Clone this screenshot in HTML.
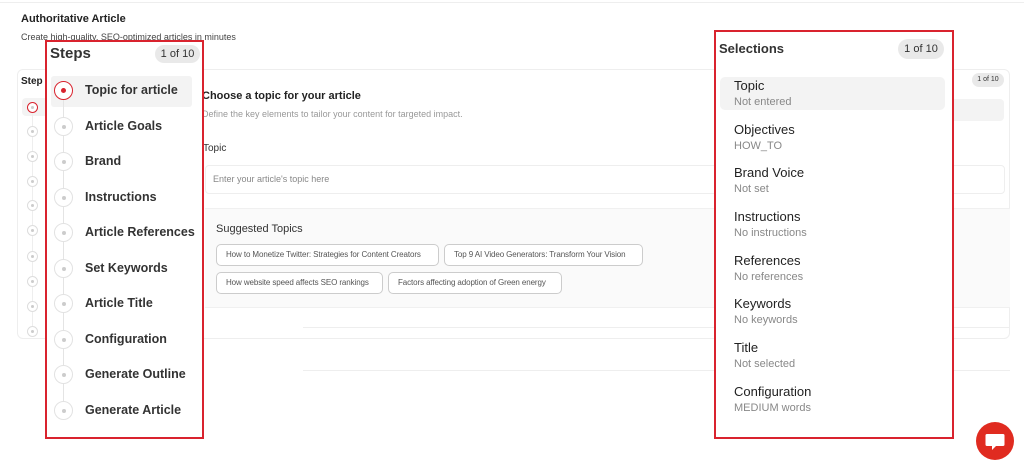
<!DOCTYPE html>
<html><head><meta charset="utf-8"><style>
*{margin:0;padding:0;box-sizing:border-box}
body{width:1024px;height:465px;background:#fff;font-family:"Liberation Sans",Arial,sans-serif;position:relative;overflow:hidden;color:#222}
.a{position:absolute;white-space:nowrap}
.badge{position:absolute;background:#e9e9e9;border-radius:10px;color:#333;text-align:center}
.chip{position:absolute;border:1px solid #ccc;border-radius:5px;font-size:8px;color:#555;padding:0 9px;line-height:20px;height:22px;background:#fff;white-space:nowrap;overflow:hidden;letter-spacing:-0.1px}
.mc{position:absolute;left:27px;width:11px;height:11px;border:1px solid #ddd;border-radius:50%;background:#fff}
.mc::after{content:"";position:absolute;left:3px;top:3px;width:3px;height:3px;border-radius:50%;background:#ccc}
.sc{position:absolute;left:54px;width:19px;height:19px;border:1.5px solid #e2e2e2;border-radius:50%;background:#fff;display:flex;align-items:center;justify-content:center}
.sc i{display:block;width:4px;height:4px;border-radius:50%;background:#ccc}
.st{position:absolute;left:85px;font-size:12.5px;font-weight:bold;color:#333;white-space:nowrap}
.sl{position:absolute;left:734px;font-size:13px;color:#222}
.ss{position:absolute;left:734px;font-size:11px;color:#888}
</style></head><body>
<div class="a" style="left:0;top:2px;width:1024px;border-top:1px solid #eee"></div>
<div class="a" style="left:21px;top:13px;font-size:11px;font-weight:bold">Authoritative Article</div>
<div class="a" style="left:21px;top:32px;font-size:9px;color:#444">Create high-quality, SEO-optimized articles in minutes</div>
<div class="a" style="left:17px;top:69px;width:993px;height:270px;border:1px solid #eee;border-radius:6px"></div>
<div class="a" style="left:21px;top:76px;font-size:10px;font-weight:bold">Step</div>
<div class="a" style="left:22px;top:98px;width:30px;height:18px;background:#f3f3f3;border-radius:4px"></div>
<div class="a" style="left:32px;top:110px;height:222px;border-left:1px solid #eee"></div>
<div class="mc" style="top:102px;border-color:#d9232e"></div>
<div class="mc" style="top:126px"></div><div class="mc" style="top:151px"></div><div class="mc" style="top:176px"></div><div class="mc" style="top:200px"></div><div class="mc" style="top:225px"></div><div class="mc" style="top:251px"></div><div class="mc" style="top:276px"></div><div class="mc" style="top:301px"></div><div class="mc" style="top:326px"></div>

<div class="a" style="left:202px;top:90px;font-size:11px;font-weight:bold">Choose a topic for your article</div>
<div class="a" style="left:202px;top:109px;font-size:9px;color:#999">Define the key elements to tailor your content for targeted impact.</div>
<div class="a" style="left:203px;top:143px;font-size:10px;color:#333">Topic</div>
<div class="a" style="left:205px;top:165px;width:800px;height:29px;border:1px solid #eee;border-radius:4px"></div>
<div class="a" style="left:213px;top:174px;font-size:9px;color:#888">Enter your article's topic here</div>
<div class="a" style="left:205px;top:208px;width:805px;height:100px;background:#fafafa;border-top:1px solid #f0f0f0;border-bottom:1px solid #f0f0f0"></div>
<div class="a" style="left:216px;top:223px;font-size:11px;color:#333">Suggested Topics</div>
<div class="chip" style="left:216px;top:244px;width:223px">How to Monetize Twitter: Strategies for Content Creators</div>
<div class="chip" style="left:444px;top:244px;width:199px">Top 9 AI Video Generators: Transform Your Vision</div>
<div class="chip" style="left:216px;top:272px;width:167px">How website speed affects SEO rankings</div>
<div class="chip" style="left:388px;top:272px;width:174px">Factors affecting adoption of Green energy</div>
<div class="a" style="left:303px;top:327px;width:707px;border-top:1px solid #eee"></div>
<div class="a" style="left:303px;top:370px;width:707px;border-top:1px solid #eee"></div>
<div class="badge" style="left:972px;top:73px;width:32px;height:14px;font-size:7px;line-height:14px">1 of 10</div>
<div class="a" style="left:950px;top:99px;width:54px;height:22px;background:#f3f3f3;border-radius:4px"></div>

<div class="a" style="left:45px;top:40px;width:159px;height:399px;border:2.5px solid #d9232e;background:#fff"></div>
<div class="a" style="left:50px;top:45px;font-size:15px;font-weight:bold;color:#333">Steps</div>
<div class="badge" style="left:155px;top:45px;width:45px;height:18px;font-size:11px;line-height:18px">1 of 10</div>
<div class="a" style="left:51px;top:76px;width:141px;height:31px;background:#f3f3f3;border-radius:3px"></div>
<div class="a" style="left:63px;top:100px;height:312px;border-left:1px solid #e4e4e4"></div>
<div class="sc" style="top:81px;border-color:#d9232e"><i style="width:5px;height:5px;background:#d9232e"></i></div>
<div class="sc" style="top:117px"><i></i></div><div class="sc" style="top:152px"><i></i></div><div class="sc" style="top:188px"><i></i></div><div class="sc" style="top:223px"><i></i></div><div class="sc" style="top:259px"><i></i></div><div class="sc" style="top:294px"><i></i></div><div class="sc" style="top:330px"><i></i></div><div class="sc" style="top:365px"><i></i></div><div class="sc" style="top:401px"><i></i></div>
<div class="st" style="top:83px">Topic for article</div>
<div class="st" style="top:119px">Article Goals</div>
<div class="st" style="top:154px">Brand</div>
<div class="st" style="top:190px">Instructions</div>
<div class="st" style="top:225px">Article References</div>
<div class="st" style="top:261px">Set Keywords</div>
<div class="st" style="top:296px">Article Title</div>
<div class="st" style="top:332px">Configuration</div>
<div class="st" style="top:367px">Generate Outline</div>
<div class="st" style="top:403px">Generate Article</div>

<div class="a" style="left:714px;top:30px;width:240px;height:409px;border:2.5px solid #d9232e;background:#fff"></div>
<div class="a" style="left:719px;top:41px;font-size:13px;font-weight:bold;color:#333">Selections</div>
<div class="badge" style="left:898px;top:39px;width:46px;height:20px;font-size:11px;line-height:20px">1 of 10</div>
<div class="a" style="left:720px;top:77px;width:225px;height:33px;background:#f3f3f3;border-radius:5px"></div>
<div class="sl" style="top:78px">Topic</div><div class="ss" style="top:96px">Not entered</div>
<div class="sl" style="top:122px">Objectives</div><div class="ss" style="top:140px">HOW_TO</div>
<div class="sl" style="top:165px">Brand Voice</div><div class="ss" style="top:183px">Not set</div>
<div class="sl" style="top:209px">Instructions</div><div class="ss" style="top:227px">No instructions</div>
<div class="sl" style="top:253px">References</div><div class="ss" style="top:271px">No references</div>
<div class="sl" style="top:296px">Keywords</div><div class="ss" style="top:314px">No keywords</div>
<div class="sl" style="top:340px">Title</div><div class="ss" style="top:358px">Not selected</div>
<div class="sl" style="top:384px">Configuration</div><div class="ss" style="top:402px">MEDIUM words</div>

<svg class="a" style="left:976px;top:422px" width="38" height="38" viewBox="0 0 38 38">
<circle cx="19" cy="19" r="19" fill="#e02b20"/>
<path d="M11 12h16a1.5 1.5 0 0 1 1.5 1.5v9a1.5 1.5 0 0 1-1.5 1.5h-7l-4 4v-4h-5a1.5 1.5 0 0 1-1.5-1.5v-9A1.5 1.5 0 0 1 11 12z" fill="#fff"/>
</svg>
</body></html>
